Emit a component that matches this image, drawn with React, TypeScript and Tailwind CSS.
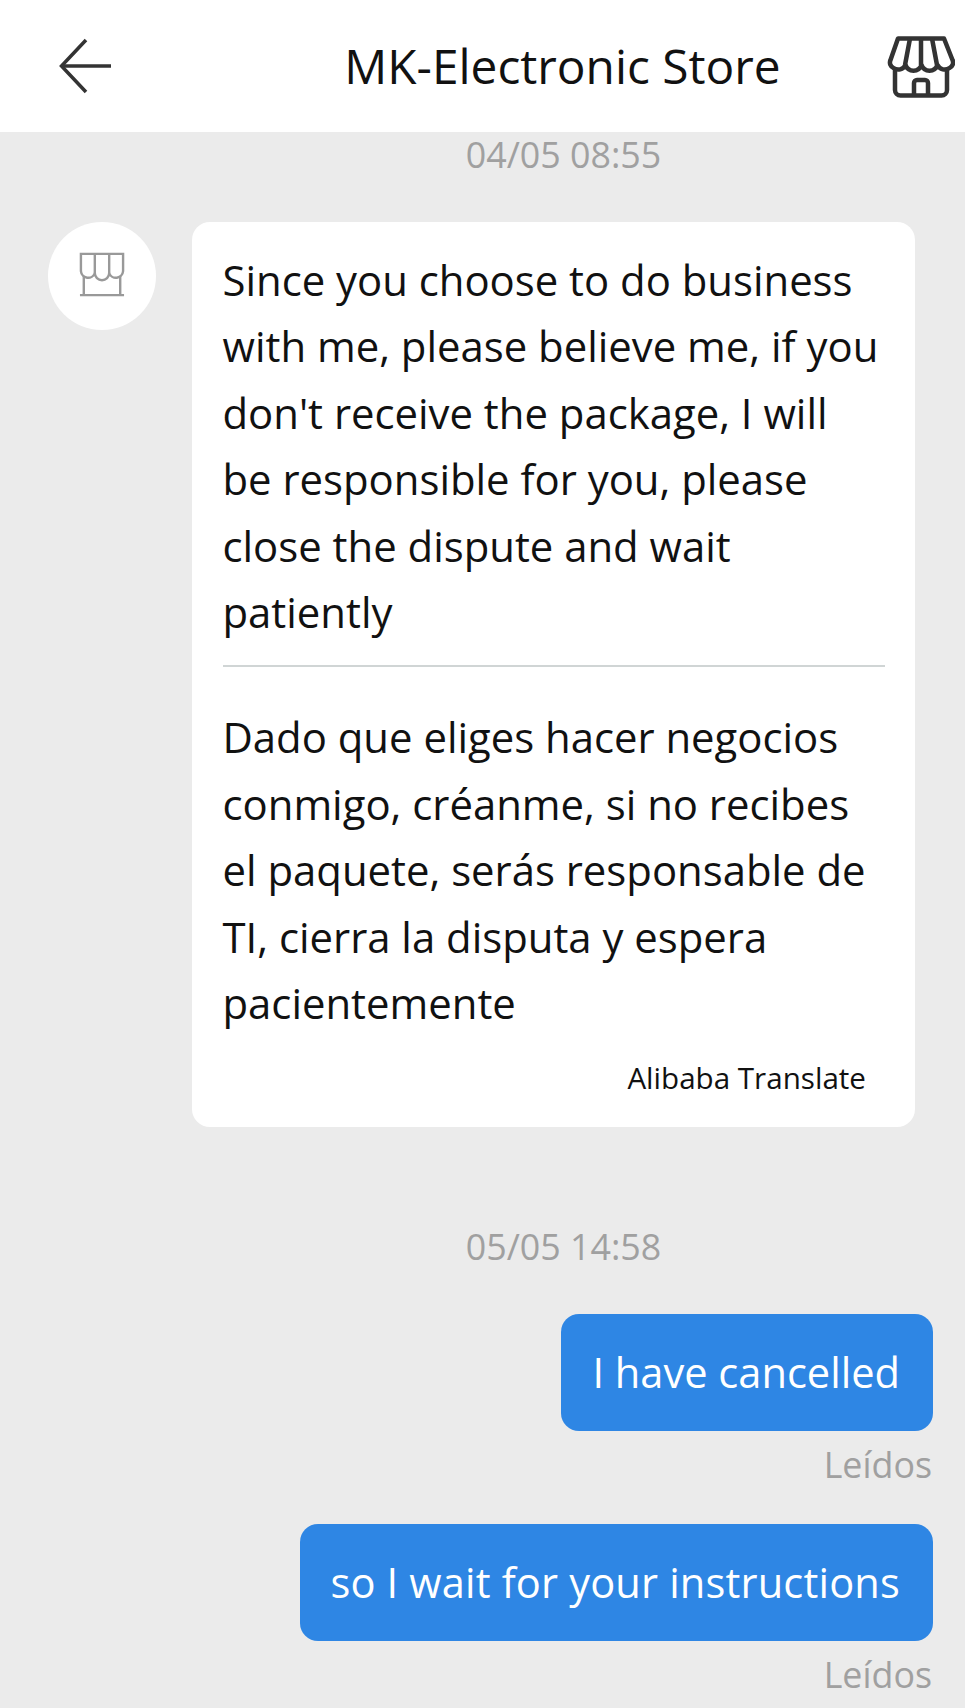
export default function App() {
  const font = { fontFamily: '"Open Sans", sans-serif' };
  return (
    <div style={font} className="w-[965px] h-[1708px] bg-[#ebebeb] overflow-hidden flex flex-col">
      <header className="h-[132px] bg-white flex items-center relative shrink-0">
        <svg className="absolute left-[58px] top-[38px]" width="56" height="56" viewBox="0 0 56 56" fill="none" stroke="#333" strokeWidth="3.5">
          <path d="M53 28H4" />
          <path d="M28 2 L3.5 28 L28 54" />
        </svg>
        <div className="w-full text-center text-[47.8px] leading-[60px] text-[#111] pl-[160px]">MK-Electronic Store</div>
        <svg className="absolute left-[887px] top-[36px]" width="68" height="62" viewBox="0 0 68 62" fill="none" stroke="#333" strokeWidth="4.5" strokeLinejoin="round">
          <path d="M11 2.5H57L65.5 24a6 6 0 0 1-3 8 8 8 0 0 1-12-3 8.5 8.5 0 0 1-16 0 8.5 8.5 0 0 1-16 0 8 8 0 0 1-12 3 6 6 0 0 1-3-8Z" />
          <path d="M23 2.5L18 29M34 2.5V29M45 2.5L50 29" />
          <path d="M8 33V54a5.5 5.5 0 0 0 5.5 5.5H54.5a5.5 5.5 0 0 0 5.5-5.5V33" />
          <path d="M27 59V47a3 3 0 0 1 3-3H38a3 3 0 0 1 3 3V59" />
        </svg>
      </header>
      <div className="text-center text-[35.8px] leading-[44px] text-[#a0a0a0] pl-[162px]">04/05 08:55</div>
      <div className="flex items-start mt-[46px] pl-[48px]">
        <div className="w-[108px] h-[108px] rounded-full bg-white flex items-center justify-center shrink-0">
          <svg width="46" height="46" viewBox="0 0 48 48" fill="none" stroke="#999" strokeWidth="2.5" className="-translate-y-px">
            <path d="M2 2H46V20a7.5 7.5 0 0 1-14.5 2 7.5 7.5 0 0 1-15 0A7.5 7.5 0 0 1 2 20Z" />
            <path d="M16.5 2V22M31.5 2V22" />
            <path d="M5 25V45M43 25V45M1 45H47" />
          </svg>
        </div>
        <div className="ml-[36px] w-[723px] h-[905px] bg-white rounded-[18px] pt-[25px] pl-[30.5px] pr-[30px] text-[41.85px] leading-[66.4px] text-[#111]">
          <div>
            Since you choose to do business<br />with me, please believe me, if you<br />don't receive the package, I will<br />be responsible for you, please<br />close the dispute and wait<br />patiently
          </div>
          <div className="h-[2px] bg-[#d0d5d5] mt-[20px] mb-[37px]" />
          <div>
            Dado que eliges hacer negocios<br />conmigo, créanme, si no recibes<br />el paquete, serás responsable de<br />TI, cierra la disputa y espera<br />pacientemente
          </div>
          <div className="text-right text-[29.6px] leading-[40px] pr-[19px] mt-[22px]">Alibaba Translate</div>
        </div>
      </div>
      <div className="text-center text-[35.8px] leading-[44px] text-[#a0a0a0] pl-[162px] mt-[97px]">05/05 14:58</div>
      <div className="flex flex-col items-end pr-[32px] mt-[46px]">
        <div className="h-[117px] flex items-center bg-[#2e86e4] rounded-[18px] pl-[31px] pr-[33px] text-[41.6px] text-white">I have cancelled</div>
        <div className="text-[35.8px] leading-[44px] text-[#a0a0a0] mt-[11px] pr-[1px]">Leídos</div>
        <div className="h-[117px] flex items-center bg-[#2e86e4] rounded-[18px] pl-[30px] pr-[33px] text-[41.6px] tracking-[0.17px] text-white mt-[38px]">so I wait for your instructions</div>
        <div className="text-[35.8px] leading-[44px] text-[#a0a0a0] mt-[11px] pr-[1px]">Leídos</div>
      </div>
    </div>
  );
}
